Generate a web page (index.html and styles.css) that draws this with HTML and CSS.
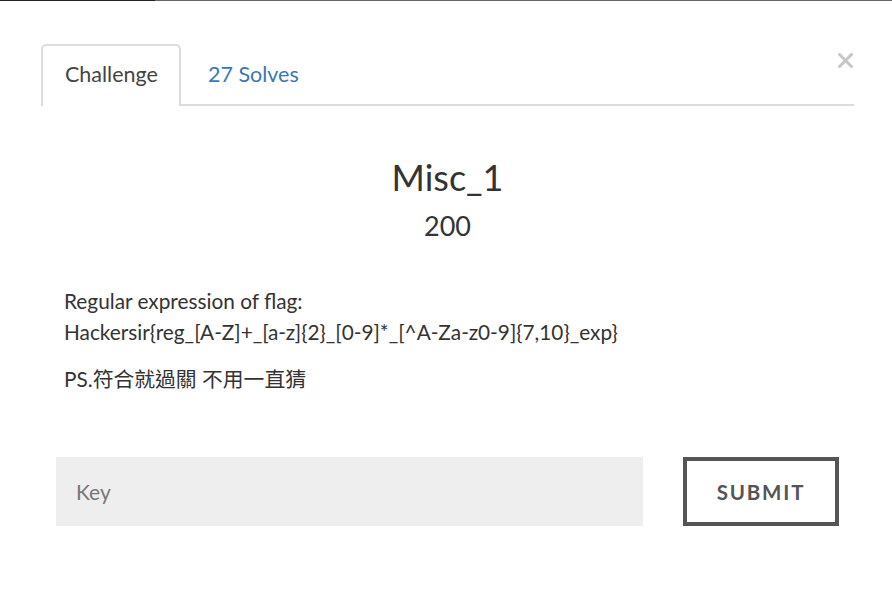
FILE: index.html
```html
<!DOCTYPE html>
<html>
<head>
<meta charset="utf-8">
<link rel="stylesheet" href="styles.css">
</head>
<body>
<div class="topline"><span class="dark"></span><span class="gray"></span></div>
<div class="modal">
  <div class="tabs">
    <div class="tab active">Challenge</div>
    <div class="tab link">27 Solves</div>
    <span class="close"><svg width="15" height="15" viewBox="0 0 15 15"><path d="M1.5 1.5 L13.5 13.5 M13.5 1.5 L1.5 13.5" stroke="#c6c6c6" stroke-width="3" stroke-linecap="square"/></svg></span>
  </div>
  <div class="head">
    <h2 class="title">Misc_1</h2>
    <h3 class="value">200</h3>
  </div>
  <div class="desc">
    <p>Regular expression of flag:<br>Hackersir{reg_[A-Z]+_[a-z]{2}_[0-9]*_[^A-Za-z0-9]{7,10}_exp}</p>
    <p>PS.符合就過關 不用一直猜</p>
  </div>
  <div class="form">
    <input class="key" type="text" placeholder="Key">
    <button class="submit">SUBMIT</button>
  </div>
</div>
</body>
</html>
```
FILE: styles.css
```css
* { box-sizing: border-box; }
html, body { margin: 0; padding: 0; background: #fff; }
body {
  font-family: Lato, "Noto Sans CJK TC", sans-serif;
  color: #333;
  width: 892px;
  height: 610px;
  overflow: hidden;
}
.topline { display: flex; height: 1px; }
.topline .dark { width: 155px; background: #222; }
.topline .gray { flex: 1; background: #666; }
.modal { padding: 42px 38px 0 41px; }
.tabs {
  display: flex;
  align-items: flex-end;
  border-bottom: 2px solid #ddd;
  height: 63px;
  position: relative;
}
.tab {
  font-size: 21.5px;
  height: 62px;
  line-height: 26px;
  padding: 19px 23px 0;
}
.tab.active {
  border: 2px solid #ddd;
  border-bottom: none;
  border-radius: 5px 5px 0 0;
  background: #fff;
  margin-bottom: -2px;
  color: #444;
  width: 140px;
  padding-left: 22px;
  padding-top: 15px;
}
.tab.link { color: #3a76b4; padding-left: 27px; }
.close {
  position: absolute;
  right: 1px;
  top: 10px;
  width: 15px;
  height: 15px;
  display: block;
}
.close svg { display: block; }
.head { text-align: center; margin-top: 49px; }
.title { font-size: 36px; font-weight: 400; margin: 0; line-height: 44px; color: #333; }
.value { font-size: 27px; font-weight: 400; margin: 10px 0 0; line-height: 34px; color: #333; }
.desc { padding-left: 23px; margin-top: 42px; font-size: 20.8px; line-height: 31px; color: #333; }
.desc p { margin: 0 0 16px; }
.form { display: flex; margin-top: 63px; padding-left: 15px; }
.key {
  width: 587px;
  height: 69px;
  border: none;
  background: #eee;
  font-family: Lato, sans-serif;
  font-size: 21px;
  padding: 0 20px;
  outline: none;
}
.key::placeholder { color: #777; }
.submit {
  margin-left: 40px;
  width: 156px;
  height: 69px;
  border: 4px solid #555;
  background: #fff;
  color: #555;
  font-family: Lato, sans-serif;
  font-weight: 700;
  font-size: 20.5px;
  letter-spacing: 1.8px;
  padding: 0;
}
```
